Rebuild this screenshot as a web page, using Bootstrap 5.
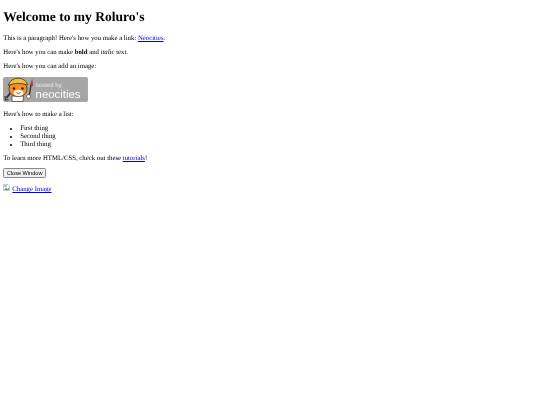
<!DOCTYPE html>
<html lang="en">
<head>
<meta charset="utf-8">
<title>Roluro</title>
<link href="https://cdn.jsdelivr.net/npm/bootstrap@5.3.0/dist/css/bootstrap.min.css" rel="stylesheet">
<style>
body{background:#fff;color:#000;font-family:"Liberation Serif",serif;font-size:6.78px;line-height:7.7px;padding:3.35px;text-rendering:geometricPrecision;filter:blur(.25px);}
h1{font-family:"Liberation Serif",serif;font-size:13.5px;line-height:16px;font-weight:700;margin:5.4px 0 9.8px;}
p{margin:0 0 6.7px;}
a{color:#00e;}
ul{margin:0 0 6.7px;padding-left:16.8px;}
.img-para{margin-top:-.4px;margin-bottom:8.6px;}
.tight-para{margin-bottom:5.5px;}
.btn-para{margin-bottom:5.6px;}
.badge-neo{display:block;width:85px;height:25px;}
.btn-close-win{font-family:"Liberation Sans",sans-serif;font-size:5.6px;line-height:6.4px;color:#000;background:#efefef;border:.8px solid #8a8a8a;border-radius:1.3px;padding:.9px 2.4px;display:block;}
.broken{display:inline-block;width:7px;height:7px;vertical-align:-.5px;margin-right:2px;}
</style>
</head>
<body>
<h1>Welcome to my Roluro's</h1>
<p>This is a paragraph! Here's how you make a link: <a href="#">Neocities</a>.</p>
<p>Here's how you can make <strong>bold</strong> and <em>italic</em> text.</p>
<p>Here's how you can add an image:</p>
<p class="img-para">
<svg class="badge-neo" viewBox="0 0 85 25" role="img" aria-label="hosted by neocities">
<rect x=".3" y=".3" width="84.4" height="24.4" rx="2" fill="#a6a6a6" stroke="#8f8f8f" stroke-width=".6"/>
<path d="M8 15 L3.5 21" stroke="#333" stroke-width="1.8" fill="none"/>
<path d="M2 19 L2.5 23 L5.5 22.5" stroke="#333" stroke-width="1.2" fill="none"/>
<path d="M9 19 L9 24.5 H20 L20.5 19Z" fill="#fff" stroke="#4a3318" stroke-width=".7"/>
<path d="M6 12 Q6 5 15 5 Q24 5 24 12 Q24 19 15 19.5 Q6 19 6 12Z" fill="#f0922b" stroke="#4a3318" stroke-width=".8"/>
<path d="M5 8.5 Q8 .8 16 1.2 Q23 2 24.5 8 Q15 4.5 5 8.5Z" fill="#f7bd3f" stroke="#4a3318" stroke-width=".8"/>
<ellipse cx="15.5" cy="16" rx="5" ry="3.3" fill="#fff4e2"/>
<circle cx="11" cy="11.5" r="1.2" fill="#222"/>
<circle cx="19.5" cy="11.5" r="1.2" fill="#222"/>
<path d="M13.5 15.5 Q15.5 18 17.5 15.5" stroke="#222" stroke-width=".7" fill="none"/>
<path d="M26 20 L28 8" stroke="#4a3318" stroke-width="1.5"/>
<path d="M27 8.5 L29.2 1.5 L30 9Z" fill="#a83436"/>
<circle cx="25.5" cy="19.5" r="2" fill="#fff" stroke="#4a3318" stroke-width=".6"/>
<text x="32.6" y="10.3" font-family="Liberation Sans, sans-serif" font-size="6" fill="#e8e8e8">hosted by,</text>
<text x="32.6" y="20.5" font-family="Liberation Sans, sans-serif" font-size="11.4" fill="#fff">neocities</text>
</svg>
</p>
<p>Here's how to make a list:</p>
<ul>
<li>First thing</li>
<li>Second thing</li>
<li>Third thing</li>
</ul>
<p class="tight-para">To learn more HTML/CSS, check out these <a href="#">tutorials</a>!</p>
<p class="btn-para"><button type="button" class="btn-close-win">Close Window</button></p>
<p>
<svg class="broken" viewBox="0 0 7 7" aria-hidden="true">
<path d="M.5.5H5L6.5 2V6.5H.5Z" fill="#fff" stroke="#9aa5b5" stroke-width=".6"/>
<path d="M1 6L3 3.5L4.5 5L6 4V6Z" fill="#6a9f5a"/>
<rect x="1.2" y="1.2" width="2.5" height="1.8" fill="#8db4e8"/>
</svg><a href="#">Change Image</a>
</p>
<script src="https://cdn.jsdelivr.net/npm/bootstrap@5.3.0/dist/js/bootstrap.bundle.min.js"></script>
</body>
</html>
